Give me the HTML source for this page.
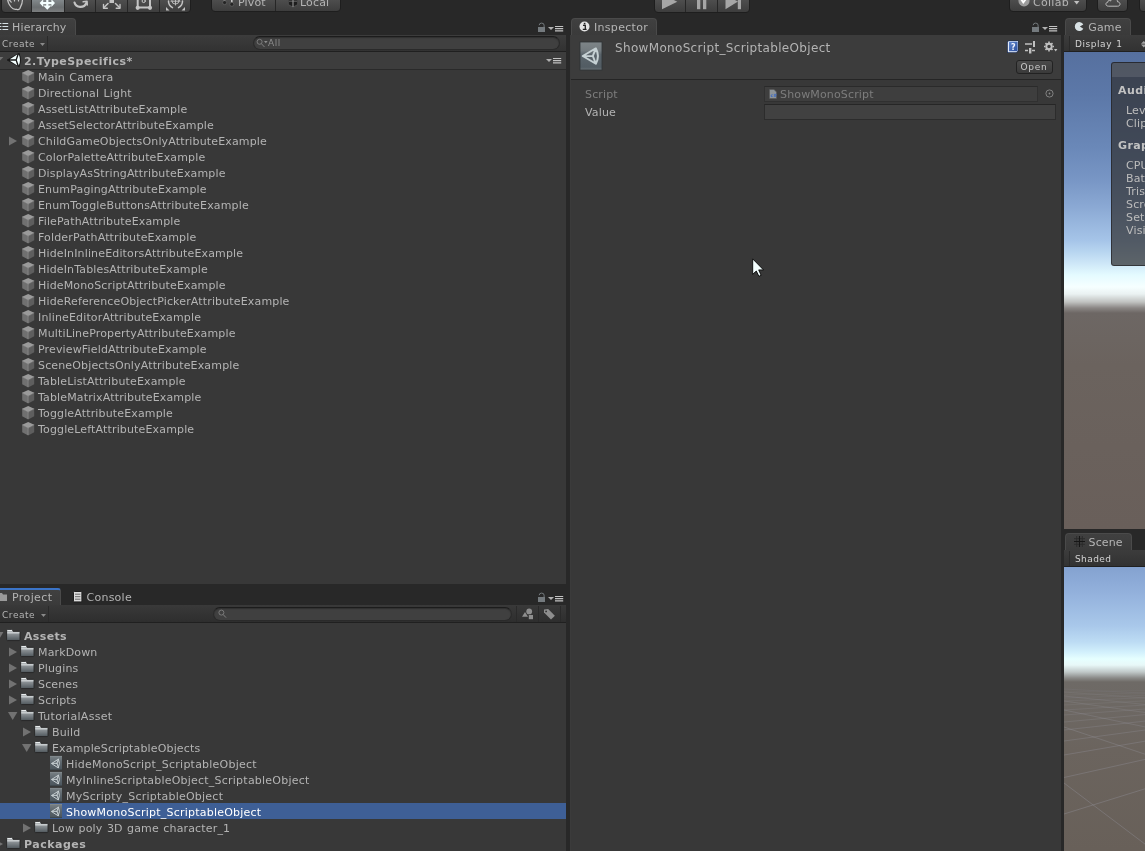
<!DOCTYPE html>
<html><head><meta charset="utf-8"><title>Unity</title>
<style>
*{box-sizing:border-box;margin:0;padding:0}
html,body{width:1145px;height:851px;overflow:hidden;background:#282828}
body{position:relative;font-family:"DejaVu Sans","Liberation Sans",sans-serif;font-size:11px;color:#b4b4b4;letter-spacing:.15px;line-height:16px}
.a{position:absolute}
#root{position:absolute;left:0;top:0;width:1145px;height:851px;will-change:transform;transform:translateZ(0)}
.panel{position:absolute;background:#383838}
.tab{position:absolute;height:17px;background:linear-gradient(#404040,#3a3a3a);border:1px solid #4a4a4a;border-bottom:none;border-radius:4px 4px 0 0;line-height:15px;white-space:nowrap}
.tbar{position:absolute;height:17px;background:linear-gradient(#3c3c3c,#323232);border-bottom:1px solid #202020}
.r{position:absolute;left:0;height:16px;line-height:16px;white-space:nowrap}
.t{position:absolute;top:0;white-space:nowrap;margin-top:1px;word-spacing:.8px}
.b{font-weight:bold}
.btn{position:absolute;background:linear-gradient(#585858,#4d4d4d 40%,#3d3d3d);border:1px solid #1e1e1e;border-radius:4px}
.search{position:absolute;height:14px;border-radius:7px;background:#404040;border:1px solid #2a2a2a;border-top-color:#1c1c1c;box-shadow:inset 0 1px 1px #303030}
.fld{position:absolute;background:#414141;border:1px solid #2c2c2c;border-top-color:#262626}
svg{position:absolute;overflow:visible}
</style></head>
<body><div id="root">
<svg width="0" height="0" style="left:0;top:0"><defs>
<g id="cube"><path d="M6.2 0 L12.2 2.8 L6.2 5.9 L0.2 2.8Z" fill="#9a9a9a"/><path d="M0.2 2.8 L6.2 5.9 L6.2 13.4 L0.2 10.3Z" fill="#707070"/><path d="M12.2 2.8 L6.2 5.9 L6.2 13.4 L12.2 10.3Z" fill="#5e5e5e"/><path d="M0.2 2.8 L6.2 5.9 L12.2 2.8 M6.2 5.9 V13" fill="none" stroke="#b0b0b0" stroke-width="0.55" opacity="0.8"/></g>
<linearGradient id="fg" x1="0" y1="0" x2="0" y2="1"><stop offset="0" stop-color="#c2c6c8"/><stop offset="0.3" stop-color="#a0a5a8"/><stop offset="0.45" stop-color="#878d91"/><stop offset="1" stop-color="#4f575c"/></linearGradient>
<g id="folder"><path d="M0.6 1.6 Q0.6 0.5 1.7 0.5 L5.4 0.5 Q6.3 0.5 6.6 1.4 L6.9 2.2 L12.8 2.2 Q13.6 2.2 13.6 3 L13.6 10 Q13.6 10.8 12.8 10.8 L1.4 10.8 Q0.6 10.8 0.6 10Z" fill="url(#fg)" stroke="#262626" stroke-width="0.9"/><path d="M1.4 1.3 H5.8" stroke="#f2f5f6" stroke-width="0.9"/><path d="M1.2 3.6 H13" stroke="#e6eaec" stroke-width="0.8"/></g>
<g id="tri-r"><path d="M0 -0.4 L8 4 L0 8.4Z" fill="#727272"/></g>
<g id="tri-d"><path d="M0 0 L9.4 0 L4.7 8Z" fill="#727272"/></g>
<linearGradient id="sog" x1="0" y1="0" x2="0" y2="1"><stop offset="0" stop-color="#7a8286"/><stop offset="0.5" stop-color="#5b656c"/><stop offset="1" stop-color="#4a545b"/></linearGradient>
<g id="ulogo" fill="none" stroke-linejoin="round" stroke-linecap="round"><path d="M0.5 5 L7.4 0.6 Q9.6 5 7.4 9.4 Z M0.5 5 H5.8 M5.8 5 L7.4 0.6 M5.8 5 L7.4 9.4"/></g>
<g id="so"><rect x="0" y="0" width="12" height="14" fill="url(#sog)"/><path d="M0 0.4 H12" stroke="#858c90" stroke-width="0.8"/><path d="M0 13.6 H12" stroke="#3b4348" stroke-width="0.8"/><g transform="translate(1.4,2.6) scale(0.95)" stroke="#c9d1d4" stroke-width="1.05"><use href="#ulogo"/></g></g>
<g id="lock"><path d="M2.2 3.2 Q2.2 1.1 4.6 1.1 Q7.1 1.1 7.1 3.2 V5.5" fill="none" stroke="#7c8286" stroke-width="0.9"/><rect x="1" y="5" width="7" height="5" fill="#747a7e"/></g>
<g id="menu"><path d="M0 2 L6 2 L3 5Z" fill="#b0b0b0"/><path d="M7 1.5 H15.2 M7 3.65 H15.2 M7 5.8 H15.2" stroke="#c2c2c2" stroke-width="1.2"/></g>
</defs></svg>
<!-- top toolbar -->
<div class="btn" style="left:1px;top:-8px;width:190px;height:21px"></div>
<div class="a" style="left:32px;top:0;width:32px;height:12px;background:linear-gradient(#82888b,#6b6f71 60%,#7c7e7f)"></div>
<div class="a" style="left:31px;top:0;width:1px;height:12px;background:#262626"></div>
<div class="a" style="left:64px;top:0;width:1px;height:12px;background:#262626"></div>
<div class="a" style="left:95px;top:0;width:1px;height:12px;background:#262626"></div>
<div class="a" style="left:127px;top:0;width:1px;height:12px;background:#262626"></div>
<div class="a" style="left:159px;top:0;width:1px;height:12px;background:#262626"></div>
<svg style="left:0;top:0" width="192" height="12" fill="none" stroke="#c4c4c4" stroke-width="1.2" stroke-linecap="round" stroke-linejoin="round"><path d="M7.6 -1 C7.6 1.5 9 4.5 11 7 C12.5 8.8 14.5 9.8 16.5 9.2 C17.5 9.8 19 9.6 19.8 8.6 C21.5 5.5 22.6 2.5 22.6 -1 M11.2 2.2 L9 -0.5 M14.5 1 V-1 M18.5 1 V-1"/><g stroke="none" fill="#f4ffff"><rect x="42" y="2" width="10.6" height="2.2"/><rect x="46.2" y="-2" width="2.2" height="8"/><path d="M43.2 5.6 H51.4 L47.3 9.8Z"/><path d="M39.6 3.1 L43.2 -0.8 V7Z M55 3.1 L51.4 -0.8 V7Z"/></g><path d="M74.5 2.5 C76 8 84 8.5 86.3 3" stroke-width="2.2"/><path d="M83.2 1.8 L87 1.2 L87.2 5" stroke-width="1.6"/><rect x="109.5" y="-2" width="4.5" height="5" fill="#c4c4c4" stroke="none"/><path d="M108 3.5 L104 7.5 M115.5 3.5 L119.5 7.5" stroke-width="1.5"/><path d="M103.5 4.5 V8.3 H107.3 M120 4.5 V8.3 H116.2" stroke-width="1.4"/><path d="M137.7 -2 V7.6 H150 V-2" stroke-width="2"/><circle cx="137.7" cy="7.8" r="2.1" fill="#c4c4c4" stroke="none"/><circle cx="150" cy="7.8" r="2.1" fill="#c4c4c4" stroke="none"/><circle cx="143.7" cy="1" r="1.6" stroke-width="1"/><path d="M168.5 1 A7.2 7.2 0 0 0 172.5 7.6 M178.5 7.6 A7.2 7.2 0 0 0 182.5 1" stroke-width="1.5"/><circle cx="175.5" cy="0.5" r="3.6" stroke-width="0.9"/><path d="M175.5 -3 V5 M171 1.2 H180" stroke-width="0.9"/><path d="M166 7 V10.5 H169.5Z M185 7 V10.5 H181.5Z" fill="#c4c4c4" stroke="none"/></svg>
<div class="btn" style="left:211px;top:-8px;width:130px;height:20px"></div>
<div class="a" style="left:275px;top:0;width:1px;height:11px;background:#262626"></div>
<svg style="left:222px;top:0" width="80" height="10"><path d="M2.5 -1 V2.5 M9.8 -1 V4" stroke="#c4c4c4" stroke-width="1.6"/><circle cx="2.6" cy="2.6" r="2" fill="#242424" stroke="#6a6a6a" stroke-width="0.6"/><circle cx="9.8" cy="4.3" r="2" fill="#242424" stroke="#6a6a6a" stroke-width="0.6"/><path d="M66.3 -2 V4.6 L71 7.2 L75.7 4.6 V-2" fill="#1e1e1e" stroke="#555" stroke-width="0.8"/><path d="M71 -2 V7" stroke="#b0b0b0" stroke-width="0.9"/><path d="M67 1.2 H75" stroke="#8a8a8a" stroke-width="0.7"/></svg>
<div class="a t" style="left:238px;top:-6px">Pivot</div>
<div class="a t" style="left:300px;top:-6px">Local</div>
<div class="btn" style="left:654px;top:-8px;width:96px;height:21px"></div>
<div class="a" style="left:685px;top:0;width:1px;height:12px;background:#262626"></div>
<div class="a" style="left:717px;top:0;width:1px;height:12px;background:#262626"></div>
<svg style="left:655px;top:0" width="94" height="12" fill="#a6a6a6"><path d="M7 -6 L22.3 1.7 L7 9.3Z"/><rect x="42" y="-2" width="3.3" height="11.2"/><rect x="48" y="-2" width="3.3" height="11.2"/><path d="M70.5 -4.5 L83 1.5 L70.5 9.3Z"/><rect x="82.8" y="-2" width="3.2" height="11.2"/></svg>
<div class="btn" style="left:1009px;top:-8px;width:78px;height:20px"></div>
<svg style="left:1016px;top:0" width="70" height="10"><circle cx="8" cy="0.8" r="5.6" fill="#9c9c9c"/><path d="M4.8 -1.2 L7.3 2.4 L11.8 -3.6" fill="none" stroke="#fff" stroke-width="1.9"/><path d="M58 1 H63.4 L60.7 4.6Z" fill="#c0c0c0"/></svg>
<div class="a t" style="left:1033px;top:-6px;letter-spacing:.3px">Collab</div>
<div class="btn" style="left:1097px;top:-8px;width:31px;height:20px"></div>
<svg style="left:1097px;top:0" width="31" height="10"><path d="M11.5 6.2 H20.6 C23.8 6.2 23.8 2 20.6 1.8 C20.4 -2 14.5 -3 13.6 1 C12.5 0 10.6 0.6 10.8 2.2 C8.2 2.4 8.2 6.2 11.5 6.2Z" fill="none" stroke="#c8c8c8" stroke-width="0.9"/></svg>
<div class="btn" style="left:1139px;top:-8px;width:31px;height:20px"></div>
<!-- hierarchy -->
<div class="panel" style="left:0;top:35px;width:566px;height:549px"></div>
<div class="tab" style="left:-4px;top:18px;width:80px"><span class="t" style="left:15px">Hierarchy</span></div>
<svg style="left:-1px;top:22px" width="10" height="9"><path d="M0 1.5 H2.4 M3.4 1.5 H9.2 M0 4.5 H2.4 M3.4 4.5 H9.2 M0 7.5 H2.4 M3.4 7.5 H9.2" stroke="#d6e0e4" stroke-width="1.1"/></svg>
<svg style="left:537px;top:22px" width="26" height="12"><use href="#lock"/><g transform="translate(11,3)"><use href="#menu"/></g></svg>
<div class="tbar" style="left:0;top:35px;width:566px"></div>
<div class="a t" style="left:2px;top:35px;font-size:9px;letter-spacing:.55px">Create</div>
<svg style="left:39.7px;top:43px" width="5" height="3"><path d="M0 0 H5 L2.5 3Z" fill="#8a8a8a"/></svg>
<div class="a" style="left:47px;top:36px;width:1px;height:15px;background:#2a2a2a"></div>
<div class="search" style="left:253px;top:36px;width:307px"></div>
<div class="a t" style="left:268px;top:34px;color:#8c8c8c;font-size:9px;letter-spacing:.6px">All</div>
<svg style="left:256px;top:38px" width="13" height="10"><circle cx="3.6" cy="3.8" r="2.5" fill="none" stroke="#888" stroke-width="0.8"/><path d="M5.5 5.8 L8.5 9" stroke="#888" stroke-width="0.9"/><path d="M8 3 H11.6 L9.8 5.2Z" fill="#8c8c8c"/></svg>
<div class="a" style="left:0;top:52px;width:566px;height:18px;background:#3d3d3d;border-bottom:1px solid #2a2a2a"></div>
<svg style="left:-6.5px;top:57px" width="10" height="8"><g transform="scale(1,0.6)"><use href="#tri-d"/></g></svg>
<svg style="left:7px;top:53px" width="15" height="15"><path d="M0 7 L12.2 0.2 Q15 7 12.2 13.8Z" fill="#161616" stroke="#161616" stroke-width="0.6" stroke-linejoin="round"/><path d="M2.8 6.3 L10.3 1.4 L8.7 6.3Z M2.8 7.7 L10.3 12.6 L8.7 7.7Z M9.8 7 L11.8 1.5 Q14.2 7 11.8 12.5Z" fill="#f4ffff"/></svg>
<div class="a t b" style="left:24px;top:52.5px;letter-spacing:.45px">2.TypeSpecifics*</div>
<svg style="left:546px;top:57px" width="16" height="8"><use href="#menu"/></svg>
<div class="r" style="top:69px"><svg style="left:22px;top:1px" width="13" height="13"><use href="#cube"/></svg><span class="t" style="left:38px">Main Camera</span></div>
<div class="r" style="top:85px"><svg style="left:22px;top:1px" width="13" height="13"><use href="#cube"/></svg><span class="t" style="left:38px">Directional Light</span></div>
<div class="r" style="top:101px"><svg style="left:22px;top:1px" width="13" height="13"><use href="#cube"/></svg><span class="t" style="left:38px">AssetListAttributeExample</span></div>
<div class="r" style="top:117px"><svg style="left:22px;top:1px" width="13" height="13"><use href="#cube"/></svg><span class="t" style="left:38px">AssetSelectorAttributeExample</span></div>
<div class="r" style="top:133px"><svg style="left:9px;top:4px" width="7" height="8"><use href="#tri-r"/></svg><svg style="left:22px;top:1px" width="13" height="13"><use href="#cube"/></svg><span class="t" style="left:38px">ChildGameObjectsOnlyAttributeExample</span></div>
<div class="r" style="top:149px"><svg style="left:22px;top:1px" width="13" height="13"><use href="#cube"/></svg><span class="t" style="left:38px">ColorPaletteAttributeExample</span></div>
<div class="r" style="top:165px"><svg style="left:22px;top:1px" width="13" height="13"><use href="#cube"/></svg><span class="t" style="left:38px">DisplayAsStringAttributeExample</span></div>
<div class="r" style="top:181px"><svg style="left:22px;top:1px" width="13" height="13"><use href="#cube"/></svg><span class="t" style="left:38px">EnumPagingAttributeExample</span></div>
<div class="r" style="top:197px"><svg style="left:22px;top:1px" width="13" height="13"><use href="#cube"/></svg><span class="t" style="left:38px">EnumToggleButtonsAttributeExample</span></div>
<div class="r" style="top:213px"><svg style="left:22px;top:1px" width="13" height="13"><use href="#cube"/></svg><span class="t" style="left:38px">FilePathAttributeExample</span></div>
<div class="r" style="top:229px"><svg style="left:22px;top:1px" width="13" height="13"><use href="#cube"/></svg><span class="t" style="left:38px">FolderPathAttributeExample</span></div>
<div class="r" style="top:245px"><svg style="left:22px;top:1px" width="13" height="13"><use href="#cube"/></svg><span class="t" style="left:38px">HideInInlineEditorsAttributeExample</span></div>
<div class="r" style="top:261px"><svg style="left:22px;top:1px" width="13" height="13"><use href="#cube"/></svg><span class="t" style="left:38px">HideInTablesAttributeExample</span></div>
<div class="r" style="top:277px"><svg style="left:22px;top:1px" width="13" height="13"><use href="#cube"/></svg><span class="t" style="left:38px">HideMonoScriptAttributeExample</span></div>
<div class="r" style="top:293px"><svg style="left:22px;top:1px" width="13" height="13"><use href="#cube"/></svg><span class="t" style="left:38px">HideReferenceObjectPickerAttributeExample</span></div>
<div class="r" style="top:309px"><svg style="left:22px;top:1px" width="13" height="13"><use href="#cube"/></svg><span class="t" style="left:38px">InlineEditorAttributeExample</span></div>
<div class="r" style="top:325px"><svg style="left:22px;top:1px" width="13" height="13"><use href="#cube"/></svg><span class="t" style="left:38px">MultiLinePropertyAttributeExample</span></div>
<div class="r" style="top:341px"><svg style="left:22px;top:1px" width="13" height="13"><use href="#cube"/></svg><span class="t" style="left:38px">PreviewFieldAttributeExample</span></div>
<div class="r" style="top:357px"><svg style="left:22px;top:1px" width="13" height="13"><use href="#cube"/></svg><span class="t" style="left:38px">SceneObjectsOnlyAttributeExample</span></div>
<div class="r" style="top:373px"><svg style="left:22px;top:1px" width="13" height="13"><use href="#cube"/></svg><span class="t" style="left:38px">TableListAttributeExample</span></div>
<div class="r" style="top:389px"><svg style="left:22px;top:1px" width="13" height="13"><use href="#cube"/></svg><span class="t" style="left:38px">TableMatrixAttributeExample</span></div>
<div class="r" style="top:405px"><svg style="left:22px;top:1px" width="13" height="13"><use href="#cube"/></svg><span class="t" style="left:38px">ToggleAttributeExample</span></div>
<div class="r" style="top:421px"><svg style="left:22px;top:1px" width="13" height="13"><use href="#cube"/></svg><span class="t" style="left:38px">ToggleLeftAttributeExample</span></div>
<!-- project -->
<div class="panel" style="left:0;top:605px;width:566px;height:246px"></div>
<div class="tab" style="left:-4px;top:588px;width:65px;height:18px;border-top:2px solid #3b74c8;box-shadow:none;border-radius:3px 3px 0 0"><span class="t" style="left:15px;top:-1px;letter-spacing:.4px">Project</span></div>
<div class="a t" style="left:86.5px;top:589px;letter-spacing:.25px">Console</div>
<svg style="left:72.6px;top:591px" width="10" height="12"><rect x="0.5" y="0.5" width="8.4" height="10.4" rx="1" fill="#dcdcdc" stroke="#1c1c1c"/><path d="M2 3.2 H7.4 M2 5.7 H7.4 M2 8.2 H7.4" stroke="#666" stroke-width="1"/></svg>
<svg style="left:-3px;top:592px" width="10" height="9"><path d="M0 1 H5 L6 2.5 H10 V9 H0Z" fill="#9a9a9a"/></svg>
<svg style="left:537px;top:592px" width="26" height="12"><use href="#lock"/><g transform="translate(11,3)"><use href="#menu"/></g></svg>
<div class="tbar" style="left:0;top:605px;width:566px;height:18px;background:linear-gradient(#393939,#2e2e2e)"></div>
<div class="a t" style="left:2px;top:606px;font-size:9px;letter-spacing:.55px">Create</div>
<svg style="left:41px;top:614px" width="5" height="3"><path d="M0 0 H5 L2.5 3Z" fill="#8a8a8a"/></svg>
<div class="a" style="left:48px;top:606px;width:1px;height:16px;background:#2a2a2a"></div>
<div class="search" style="left:213px;top:607px;width:299px"></div>
<svg style="left:218px;top:609px" width="10" height="10"><circle cx="3.4" cy="3.6" r="2.5" fill="none" stroke="#888" stroke-width="0.8"/><path d="M5.2 5.6 L8 8.6" stroke="#888" stroke-width="0.9"/></svg>
<div class="a" style="left:516px;top:606px;width:1px;height:16px;background:#2a2a2a"></div>
<div class="a" style="left:538px;top:606px;width:1px;height:16px;background:#2a2a2a"></div>
<div class="a" style="left:560px;top:606px;width:1px;height:16px;background:#2a2a2a"></div>
<svg style="left:516px;top:605px" width="44" height="18" fill="#8e8e8e"><path d="M6 11.8 L9 7 L12 11.8Z"/><circle cx="13.2" cy="6.4" r="2.9"/><rect x="12.8" y="10" width="4.2" height="4.2"/><path d="M28 4.5 L32.2 4.1 L38.9 10.7 L35 14.6 L28 7.6Z"/><circle cx="30.1" cy="6.4" r="0.9" fill="#333"/></svg>
<div class="r" style="top:628px;"><svg style="left:-6px;top:4px" width="10" height="8"><use href="#tri-d"/></svg><svg style="left:5.8px;top:1.4px" width="15" height="13"><g transform="scale(1.03,1.07)"><use href="#folder"/></g></svg><span class="t b" style="left:24px;letter-spacing:.35px">Assets</span></div>
<div class="r" style="top:644px;"><svg style="left:9px;top:3.5px" width="8" height="9"><use href="#tri-r"/></svg><svg style="left:19.8px;top:1.4px" width="15" height="13"><g transform="scale(1.03,1.07)"><use href="#folder"/></g></svg><span class="t" style="left:38px">MarkDown</span></div>
<div class="r" style="top:660px;"><svg style="left:9px;top:3.5px" width="8" height="9"><use href="#tri-r"/></svg><svg style="left:19.8px;top:1.4px" width="15" height="13"><g transform="scale(1.03,1.07)"><use href="#folder"/></g></svg><span class="t" style="left:38px">Plugins</span></div>
<div class="r" style="top:676px;"><svg style="left:9px;top:3.5px" width="8" height="9"><use href="#tri-r"/></svg><svg style="left:19.8px;top:1.4px" width="15" height="13"><g transform="scale(1.03,1.07)"><use href="#folder"/></g></svg><span class="t" style="left:38px">Scenes</span></div>
<div class="r" style="top:692px;"><svg style="left:9px;top:3.5px" width="8" height="9"><use href="#tri-r"/></svg><svg style="left:19.8px;top:1.4px" width="15" height="13"><g transform="scale(1.03,1.07)"><use href="#folder"/></g></svg><span class="t" style="left:38px">Scripts</span></div>
<div class="r" style="top:708px;"><svg style="left:8px;top:4px" width="10" height="8"><use href="#tri-d"/></svg><svg style="left:19.8px;top:1.4px" width="15" height="13"><g transform="scale(1.03,1.07)"><use href="#folder"/></g></svg><span class="t" style="left:38px;letter-spacing:.3px">TutorialAsset</span></div>
<div class="r" style="top:724px;"><svg style="left:23px;top:3.5px" width="8" height="9"><use href="#tri-r"/></svg><svg style="left:33.8px;top:1.4px" width="15" height="13"><g transform="scale(1.03,1.07)"><use href="#folder"/></g></svg><span class="t" style="left:52px">Build</span></div>
<div class="r" style="top:740px;"><svg style="left:22px;top:4px" width="10" height="8"><use href="#tri-d"/></svg><svg style="left:33.8px;top:1.4px" width="15" height="13"><g transform="scale(1.03,1.07)"><use href="#folder"/></g></svg><span class="t" style="left:52px">ExampleScriptableObjects</span></div>
<div class="r" style="top:756px;"><svg style="left:50px;top:0" width="12" height="14"><use href="#so"/></svg><span class="t" style="left:66px;letter-spacing:.23px">HideMonoScript_ScriptableObject</span></div>
<div class="r" style="top:772px;"><svg style="left:50px;top:0" width="12" height="14"><use href="#so"/></svg><span class="t" style="left:66px;letter-spacing:.23px">MyInlineScriptableObject_ScriptableObject</span></div>
<div class="r" style="top:788px;"><svg style="left:50px;top:0" width="12" height="14"><use href="#so"/></svg><span class="t" style="left:66px;letter-spacing:.23px">MyScripty_ScriptableObject</span></div>
<div class="r" style="top:804px;color:#fff;"><div class="a" style="left:0;top:-1px;width:566px;height:16px;background:#3e5f96"></div><svg style="left:50px;top:0" width="12" height="14"><use href="#so"/></svg><span class="t" style="left:66px;letter-spacing:.23px">ShowMonoScript_ScriptableObject</span></div>
<div class="r" style="top:820px;"><svg style="left:23px;top:3.5px" width="8" height="9"><use href="#tri-r"/></svg><svg style="left:33.8px;top:1.4px" width="15" height="13"><g transform="scale(1.03,1.07)"><use href="#folder"/></g></svg><span class="t" style="left:52px">Low poly 3D game character_1</span></div>
<div class="r" style="top:836px;"><svg style="left:-5px;top:3.5px" width="8" height="9"><use href="#tri-r"/></svg><svg style="left:5.8px;top:1.4px" width="15" height="13"><g transform="scale(1.03,1.07)"><use href="#folder"/></g></svg><span class="t b" style="left:24px;letter-spacing:.5px">Packages</span></div>
<!-- inspector -->
<div class="panel" style="left:570px;top:35px;width:491px;height:816px;border-left:1px solid #3b3b3b"></div>
<div class="a" style="left:571px;top:35px;width:490px;height:44px;background:#3c3c3c"></div>
<div class="a" style="left:571px;top:79px;width:490px;height:1px;background:#252525"></div>
<div class="tab" style="left:571px;top:18px;width:86px"><span class="t" style="left:22px;letter-spacing:.3px">Inspector</span></div>
<svg style="left:579px;top:21px" width="11" height="11"><circle cx="5.5" cy="5.5" r="5" fill="#e4e4e4"/><path d="M4 4.3 H6.3 V8 M3.8 8.3 H7.6" stroke="#222" stroke-width="1.3" fill="none"/><rect x="4.8" y="1.8" width="1.6" height="1.6" fill="#222"/></svg>
<svg style="left:1031px;top:22px" width="26" height="12"><use href="#lock"/><g transform="translate(11,3)"><use href="#menu"/></g></svg>
<svg style="left:580px;top:42px" width="22" height="28"><defs><linearGradient id="big" x1="0" y1="0" x2="0" y2="1"><stop offset="0" stop-color="#7e8588"/><stop offset="0.3" stop-color="#737b7f"/><stop offset="0.45" stop-color="#5a646b"/><stop offset="0.9" stop-color="#525c63"/><stop offset="1" stop-color="#6a7378"/></linearGradient></defs><rect x="0" y="0" width="22" height="28" fill="url(#big)" stroke="#2e3336" stroke-width="0.8"/><g transform="translate(1.8,5.3) scale(1.9,1.75)" stroke="#c5d0d3" stroke-width="1.05"><use href="#ulogo"/></g></svg>
<div class="a t" style="left:615px;top:39px;font-size:12px;letter-spacing:.33px">ShowMonoScript_ScriptableObject</div>
<div class="btn" style="left:1016px;top:60px;width:37px;height:14px;border-radius:3px;background:linear-gradient(#4a4a4a,#3a3a3a);border-color:#222"></div>
<div class="a t" style="left:1020.5px;top:58px;font-size:9px;letter-spacing:.7px;color:#c8c8c8">Open</div>
<svg style="left:1006px;top:40px" width="14" height="14"><defs><linearGradient id="hb" x1="0" y1="0" x2="1" y2="1"><stop offset="0" stop-color="#5f86cf"/><stop offset="1" stop-color="#2d4f9c"/></linearGradient></defs><path d="M1 1.5 L3 0.5 H12.5 V11 L10.5 13 H1Z" fill="#1b2a4c"/><path d="M1.8 1.8 L3.2 1 H12 V10.6 L10.4 12.2 H1.8Z" fill="#e4ebf7"/><rect x="3" y="1.6" width="8.6" height="9.6" fill="url(#hb)"/><text x="5" y="9.6" font-size="8" fill="#eef3ff" font-family="DejaVu Sans,sans-serif" font-weight="bold">?</text></svg>
<svg style="left:1025px;top:41px" width="12" height="13"><path d="M0 3 H7 M0 9.5 H3 M7 9.5 H10" stroke="#c0c0c0" stroke-width="1.4"/><rect x="8" y="0" width="2" height="6" fill="#c0c0c0"/><rect x="4" y="7" width="2.4" height="5.5" fill="#c0c0c0"/></svg>
<svg style="left:1044px;top:41px" width="15" height="14"><circle cx="5" cy="5.5" r="2.7" fill="none" stroke="#c0c0c0" stroke-width="1.9"/><g stroke="#c0c0c0" stroke-width="1.6"><path d="M5 0.5 V2 M5 9 V10.5 M0 5.5 H1.5 M8.5 5.5 H10 M1.5 2 L2.6 3.1 M7.4 7.9 L8.5 9 M8.5 2 L7.4 3.1 M1.5 9 L2.6 7.9"/></g><path d="M10 8 H13.4 L11.7 10.6Z" fill="#c0c0c0"/></svg>
<div class="a t" style="left:585px;top:86px;color:#7d7d7d">Script</div>
<div class="a t" style="left:585px;top:104px">Value</div>
<div class="fld" style="left:764px;top:86px;width:274px;height:16px;background:#3e3e3e;border-color:#303030;border-top-color:#2a2a2a"></div>
<svg style="left:769px;top:89px" width="8" height="10"><path d="M0.5 0.5 H5 L7.5 3 V9.5 H0.5Z" fill="#8d9499" stroke="#555" stroke-width="0.6"/><text x="1.5" y="8" font-size="4.5" fill="#3a69c4" font-family="DejaVu Sans,sans-serif" font-weight="bold">c#</text></svg>
<div class="a t" style="left:780px;top:86px;color:#7d7d7d">ShowMonoScript</div>
<svg style="left:1045px;top:89px" width="9" height="9"><circle cx="4.5" cy="4.5" r="3.6" fill="none" stroke="#8a8a8a" stroke-width="0.9"/><circle cx="4.5" cy="4.5" r="0.9" fill="#8a8a8a"/></svg>
<div class="fld" style="left:764px;top:104px;width:292px;height:16px"></div>
<svg style="left:752px;top:258px" width="13" height="20"><path d="M0.7 0.9 V16.3 L4.3 13 L6.9 18.3 L9.1 17.3 L6.7 11.9 H11.5Z" fill="#f4ffff" stroke="#000" stroke-width="0.85" stroke-linejoin="round"/></svg>
<!-- game -->
<div class="panel" style="left:1064px;top:35px;width:81px;height:494px;background:linear-gradient(#56709f 17px,#5c78a8 60px,#6a88b8 112px,#7896c5 145px,#8aa8d3 171px,#a5c4e8 205px,#b8d6f0 217px,#cfe8f8 229px,#e4fbff 240px,#f6ffff 252px,#eaf2f2 259px,#c0c2c0 267px,#8a8684 273px,#6d6764 278px,#6b635e 330px,#695f5a 494px)"></div>
<div class="tab" style="left:1065px;top:18px;width:66px"><span class="t" style="left:22.3px">Game</span></div>
<svg style="left:1074px;top:21px" width="11" height="11"><path d="M5.9 5.6 L9.3 3.5 A4.5 4.5 0 1 0 9.3 7.7Z" fill="#d9e2e5"/></svg>
<div class="tbar" style="left:1064px;top:35px;width:81px"></div>
<div class="a t" style="left:1075px;top:35px;font-size:9px;letter-spacing:.55px;color:#d4d4d4">Display 1</div>
<div class="a" style="left:1069px;top:36px;width:1px;height:15px;background:#2a2a2a"></div>
<svg style="left:1141px;top:40.5px" width="6" height="7"><path d="M0 2.8 L2.8 0 L5.6 2.8Z M0 3.6 L2.8 6.4 L5.6 3.6Z" fill="#a4a4a4"/></svg>
<div class="a" style="left:1111px;top:62px;width:40px;height:204px;background:rgba(48,48,50,.72);border:1px solid rgba(34,34,38,.7);border-radius:3px"></div>
<div class="a" style="left:1112px;top:63px;width:40px;height:14px;background:rgba(120,125,135,.35);border-radius:2px 0 0 0"></div>
<div class="a t b" style="left:1118px;top:82px;color:#c2c2c2;letter-spacing:.4px">Audio:</div>
<div class="a t" style="left:1126px;top:102px;color:#bcbcbc">Level</div>
<div class="a t" style="left:1126px;top:115px;color:#bcbcbc">Clipping</div>
<div class="a t b" style="left:1118px;top:137px;color:#c2c2c2;letter-spacing:.4px">Graphics:</div>
<div class="a t" style="left:1126px;top:157px;color:#bcbcbc">CPU</div>
<div class="a t" style="left:1126px;top:170px;color:#bcbcbc">Batches</div>
<div class="a t" style="left:1126px;top:183px;color:#bcbcbc">Tris</div>
<div class="a t" style="left:1126px;top:196px;color:#bcbcbc">Screen</div>
<div class="a t" style="left:1126px;top:209px;color:#bcbcbc">SetPass</div>
<div class="a t" style="left:1126px;top:222px;color:#bcbcbc">Visible</div>
<!-- scene -->
<div class="panel" style="left:1064px;top:550px;width:81px;height:301px;background:linear-gradient(#84a2d0 17px,#93b1dc 43px,#a9c8ea 76px,#bddcf4 92px,#d2f0fc 102px,#e6ffff 109px,#e8f8f8 115px,#c0c8c8 122px,#8a8a88 128px,#6e6a66 132px,#6b645e 200px,#686059 301px)"></div>
<div class="tab" style="left:1065px;top:533px;width:67px"><span class="t" style="left:22.5px">Scene</span></div>
<svg style="left:1074px;top:536px" width="11" height="11"><path d="M0 2.7 H11 M0 8.3 H11 M2.7 0 V11 M8.3 0 V11" stroke="#2a2a2a" stroke-width="0.9"/><path d="M0 5.5 H11 M5.5 0 V11" stroke="#161616" stroke-width="1.1"/></svg>
<div class="tbar" style="left:1064px;top:550px;width:81px"></div>
<div class="a t" style="left:1075px;top:550px;font-size:9px;letter-spacing:.4px;color:#d4d4d4">Shaded</div>
<div class="a" style="left:1069px;top:551px;width:1px;height:15px;background:#2a2a2a"></div>
<svg style="left:1064px;top:567px" width="81" height="284" viewBox="1064 567 81 284"><g stroke="#9a9aa6" stroke-width="0.8" fill="none"><path d="M1064 814.0 L1145 788.8" opacity="0.42"/><path d="M1064 777.5 L1145 759.4" opacity="0.39"/><path d="M1064 755.0 L1145 741.2" opacity="0.36"/><path d="M1064 741.0 L1145 730.0" opacity="0.33"/><path d="M1064 730.0 L1145 721.1" opacity="0.30"/><path d="M1064 722.0 L1145 714.6" opacity="0.27"/><path d="M1064 715.0 L1145 709.0" opacity="0.24"/><path d="M1064 710.0 L1145 705.0" opacity="0.21"/><path d="M1064 705.0 L1145 700.9" opacity="0.18"/><path d="M1064 701.0 L1145 697.7" opacity="0.15"/><path d="M1064 698.0 L1145 695.3" opacity="0.12"/><path d="M1064 695.0 L1145 692.9" opacity="0.09"/><path d="M1064 692.0 L1145 690.4" opacity="0.08"/><path d="M1064 783.0 L1145 844.1" opacity="0.42"/><path d="M1064 727.0 L1145 754.2" opacity="0.37"/><path d="M1064 710.0 L1145 726.9" opacity="0.32"/><path d="M1064 701.0 L1145 712.5" opacity="0.27"/><path d="M1064 696.0 L1145 704.5" opacity="0.22"/><path d="M1064 692.0 L1145 698.0" opacity="0.17"/><path d="M1064 689.0 L1145 693.2" opacity="0.12"/></g></svg>
</div></body></html>
